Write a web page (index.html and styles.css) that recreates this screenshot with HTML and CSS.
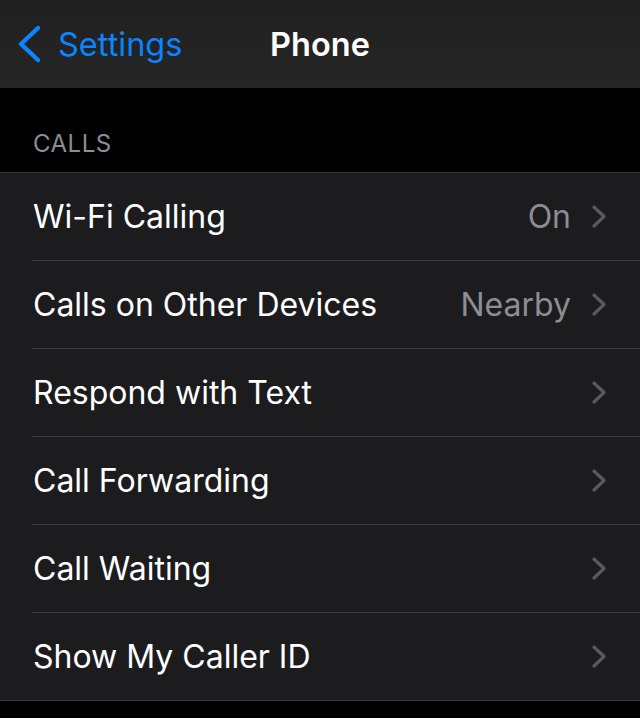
FILE: index.html
```html
<!DOCTYPE html>
<html lang="en">
  <head>
    <meta charset="UTF-8" />
    <meta name="viewport" content="width=device-width, initial-scale=1.0" />
    <title>Phone</title>
    <link rel="stylesheet" href="styles.css">
  </head>
  <body>
    <div class="nav-bar">
      <div class="nav-back">
        <svg class="back-icon" width="24" height="38" viewBox="0 0 24 38">
          <path d="M21 3 L4 19 L21 35" fill="none" stroke="#0a84ff" stroke-width="4.4" stroke-linecap="round" stroke-linejoin="round" />
        </svg>
        <span class="back-label">Settings</span>
      </div>
      <div class="nav-title">Phone</div>
    </div>

    <div class="section-header">CALLS</div>

    <div class="group">
      <div class="row">
        <span class="row-label">Wi-Fi Calling</span>
        <span class="row-value">On</span>
        <svg class="chevron" width="16" height="25" viewBox="0 0 16 25"><path d="M3 3 L13 12.5 L3 22" /></svg>
      </div>
      <div class="row">
        <span class="row-label">Calls on Other Devices</span>
        <span class="row-value">Nearby</span>
        <svg class="chevron" width="16" height="25" viewBox="0 0 16 25"><path d="M3 3 L13 12.5 L3 22" /></svg>
      </div>
      <div class="row">
        <span class="row-label">Respond with Text</span>
        <svg class="chevron" width="16" height="25" viewBox="0 0 16 25"><path d="M3 3 L13 12.5 L3 22" /></svg>
      </div>
      <div class="row">
        <span class="row-label">Call Forwarding</span>
        <svg class="chevron" width="16" height="25" viewBox="0 0 16 25"><path d="M3 3 L13 12.5 L3 22" /></svg>
      </div>
      <div class="row">
        <span class="row-label">Call Waiting</span>
        <svg class="chevron" width="16" height="25" viewBox="0 0 16 25"><path d="M3 3 L13 12.5 L3 22" /></svg>
      </div>
      <div class="row">
        <span class="row-label">Show My Caller ID</span>
        <svg class="chevron" width="16" height="25" viewBox="0 0 16 25"><path d="M3 3 L13 12.5 L3 22" /></svg>
      </div>
    </div>
  </body>
</html>
```

FILE: styles.css
```css
body,
html {
  margin: 0;
  padding: 0;
  font-family: Inter, "Noto Sans", sans-serif;
  background-color: #000000;
  color: #ffffff;
}

.nav-bar {
  position: relative;
  height: 88px;
  background: linear-gradient(#202020, #262626);
  display: flex;
  align-items: center;
  justify-content: center;
}

.nav-back {
  position: absolute;
  left: 17px;
  top: 0;
  height: 88px;
  display: flex;
  align-items: center;
  gap: 17px;
}

.back-label {
  color: #0a84ff;
  font-size: 32.5px;
  letter-spacing: 0;
  padding-top: 1px;
}

.nav-title {
  font-size: 32.5px;
  font-weight: 600;
  letter-spacing: 0;
  padding-top: 1px;
}

.section-header {
  color: #8d8d93;
  font-size: 24px;
  padding: 41px 33px 0;
  height: 43px;
  line-height: 30px;
  box-sizing: content-box;
  letter-spacing: 0.5px;
}

.group {
  background-color: #1c1c1e;
  border-top: 1px solid #38383a;
  border-bottom: 1px solid #38383a;
}

.row {
  display: flex;
  align-items: center;
  height: 88px;
  margin-left: 32px;
  padding-right: 33px;
  border-bottom: 1px solid #38383a;
  box-sizing: border-box;
}

.row:last-child {
  border-bottom: none;
  height: 87px;
}

.row-label {
  flex: 1;
  font-size: 32px;
  padding-left: 1px;
  letter-spacing: 0;
}

.row-value {
  color: #8d8d93;
  font-size: 32px;
  margin-right: 20px;
  letter-spacing: 0;
}

.chevron path {
  fill: none;
  stroke: #5a5a5e;
  stroke-width: 3.2;
  stroke-linecap: round;
  stroke-linejoin: round;
}
```
